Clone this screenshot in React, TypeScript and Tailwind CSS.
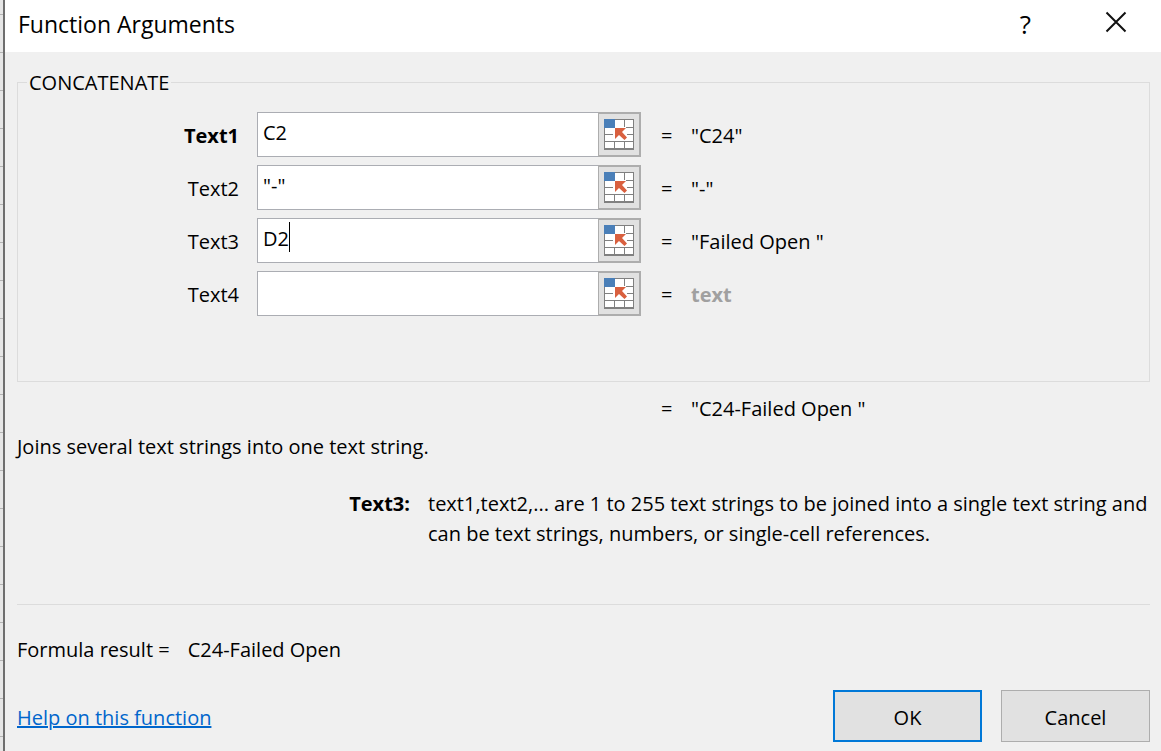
import { useState } from 'react'
import type { ReactNode } from 'react'
import { clsx } from 'clsx'

interface Argument {
  name: string
  value: string
  result: string
  required?: boolean
}

const initialArguments: Argument[] = [
  { name: 'Text1', value: 'C2', result: '"C24"', required: true },
  { name: 'Text2', value: '"-"', result: '"-"' },
  { name: 'Text3', value: 'D2', result: '"Failed Open "' },
  { name: 'Text4', value: '', result: '' },
]

function RangePickerIcon() {
  return (
    <svg width="30" height="31" viewBox="0 0 30 31" shapeRendering="crispEdges" aria-hidden="true">
      <path fill="#fff" d="M0 0h30v31H0z" />
      <path fill="#808080" d="M11 0h19v1H11zM0 15h30v1H0zM0 22h30v1H0zM11 8h19v1H11zM0 29h30v2H0zM0 9h1v22H0zM29 0h1v31h-1zM10 9h1v20h-1zM20 0h1v29h-1z" />
      <path fill="#fff" d="M9 9h2V8h11v2h2v2l-3 2 4 4v2l-3 2h-3l-3-3-4 3H9z" />
      <path fill="#4a7fb8" d="M0 0h11v9H0z" />
      <path
        fill="#d9603f"
        shapeRendering="auto"
        d="M11 9h11l-4 4 5 5.5-2.5 2.5-5.5-5-4 4z"
      />
    </svg>
  )
}

function Equals() {
  return <span className="w-[11px] shrink-0 text-center">=</span>
}

interface ArgumentRowProps {
  argument: Argument
  focused: boolean
  onFocus: () => void
  onChange: (value: string) => void
}

function ArgumentRow({ argument, focused, onFocus, onChange }: ArgumentRowProps) {
  const { name, value, result, required } = argument

  return (
    <div className="flex items-center">
      <label
        htmlFor={name}
        className={clsx('mr-[18px] w-[221px] shrink-0 pt-0.5 text-right', required && 'font-bold')}
      >
        {name}
      </label>
      <div className="relative flex h-[45px] w-96 shrink-0">
        <input
          id={name}
          type="text"
          value={value}
          onFocus={onFocus}
          onChange={(e) => onChange(e.target.value)}
          className="min-w-0 flex-1 border border-r-0 border-[#abadb3] bg-white px-[5px] pb-1 caret-transparent outline-none"
        />
        {focused && <span className="absolute left-8 top-1 h-[30px] w-px bg-black" />}
        <button
          type="button"
          aria-label={`Select range for ${name}`}
          className="flex w-[43px] items-center justify-center border-2 border-l border-[#adadad] bg-[#e1e1e1]"
        >
          <RangePickerIcon />
        </button>
      </div>
      <div className="ml-5 flex gap-[19px] whitespace-pre pt-0.5">
        <Equals />
        {result ? <output htmlFor={name}>{result}</output> : <span className="font-bold text-[#a0a0a0]">text</span>}
      </div>
    </div>
  )
}

function DialogButton({ primary, children }: { primary?: boolean; children: ReactNode }) {
  return (
    <button
      type="button"
      className={clsx(
        'h-[52px] w-[149px] bg-[#e1e1e1] pt-1',
        primary ? 'border-2 border-[#0078d7]' : 'border border-[#adadad]',
      )}
    >
      {children}
    </button>
  )
}

export default function App() {
  const [args, setArgs] = useState(initialArguments)
  const [active, setActive] = useState('Text3')

  const updateValue = (name: string, value: string) => {
    setArgs((prev) => prev.map((a) => (a.name === name ? { ...a, value } : a)))
  }

  return (
    <div className="flex min-h-screen bg-[#f0f0f0] font-['Open_Sans','Noto_Sans',sans-serif] text-[20px] leading-[30px] text-black">
      {/* edge of the worksheet behind the dialog */}
      <div className="w-[5px] shrink-0 border-r-2 border-[#6e6e6e] bg-[#e6e6e6] bg-[linear-gradient(#b4b4b4_1px,transparent_1px)] bg-[length:100%_38px] bg-[position:0_14px]" />

      <main className="min-w-0 flex-1">
        <header className="flex h-[52px] items-center bg-white pb-1 pl-[13px] pr-[34px]">
          <h1 className="flex-1 text-[23px]">Function Arguments</h1>
          <button type="button" aria-label="Help" className="mr-[74px] text-[26px]">
            ?
          </button>
          <button type="button" aria-label="Close" className="pb-1">
            <svg width="22" height="22" viewBox="0 0 22 22" fill="none" stroke="#111" strokeWidth="2" aria-hidden="true">
              <path d="M1.5 1.5l19 19M20.5 1.5l-19 19" />
            </svg>
          </button>
        </header>

        <div className="pb-2 pl-3 pr-[11px] pt-[14px]">
          <fieldset className="border border-[#dcdcdc] pb-[65px] pt-[14px]">
            <legend className="ml-[9px] px-[2px] pt-0.5">CONCATENATE</legend>
            <div className="flex flex-col gap-2">
              {args.map((argument) => (
                <ArgumentRow
                  key={argument.name}
                  argument={argument}
                  focused={argument.name === active}
                  onFocus={() => setActive(argument.name)}
                  onChange={(value) => updateValue(argument.name, value)}
                />
              ))}
            </div>
          </fieldset>

          <div className="ml-[644px] mt-3 flex gap-[19px] whitespace-pre">
            <Equals />
            <output>"C24-Failed Open "</output>
          </div>
          <p className="mt-2">Joins several text strings into one text string.</p>

          <div className="mt-[27px] flex gap-[18px]">
            <strong className="w-[393px] shrink-0 text-right font-bold">{active}:</strong>
            <p>
              text1,text2,... are 1 to 255 text strings to be joined into a single text string and can be text
              strings, numbers, or single-cell references.
            </p>
          </div>

          <hr className="mt-[55px] border-[#dcdcdc]" />

          <div className="mt-[30px] flex gap-[18px]">
            <span>Formula result =</span>
            <output>C24-Failed Open</output>
          </div>

          <footer className="mt-[25px] flex items-center gap-[19px]">
            <a href="#help" className="mr-auto pt-1 text-[#0066cc] underline decoration-2">
              Help on this function
            </a>
            <DialogButton primary>OK</DialogButton>
            <DialogButton>Cancel</DialogButton>
          </footer>
        </div>
      </main>
    </div>
  )
}
